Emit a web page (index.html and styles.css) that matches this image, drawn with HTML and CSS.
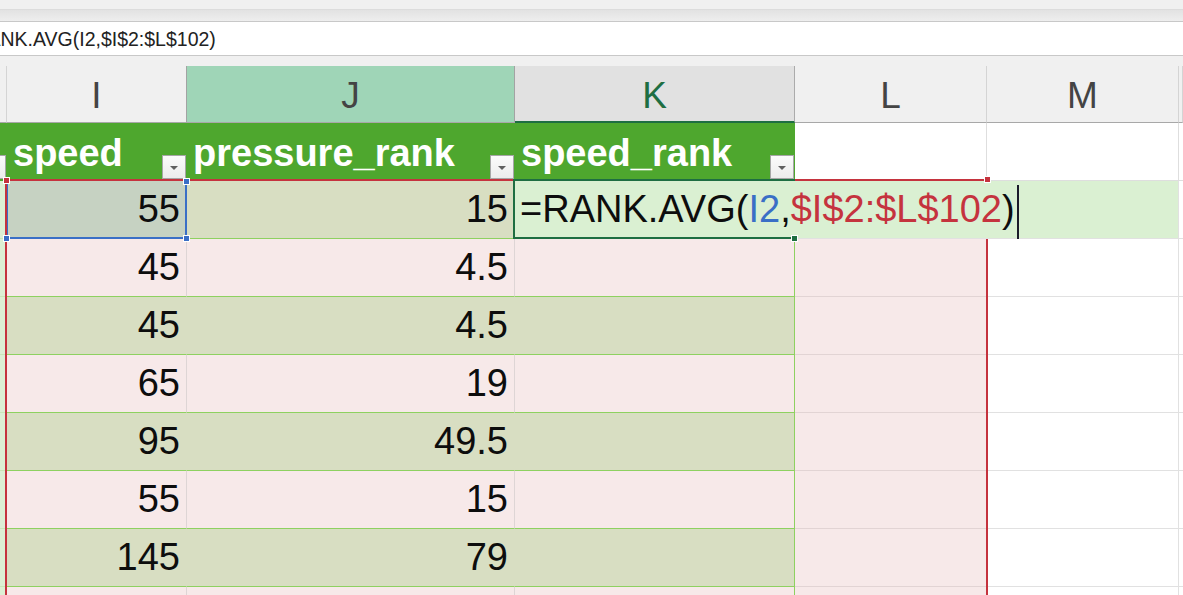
FILE: index.html
```html
<!DOCTYPE html>
<html lang="en">
<head>
<meta charset="utf-8">
<title>Sheet</title>
<link rel="stylesheet" href="styles.css">
</head>
<body>
<div class="chrome-top"></div>
<div class="chrome-shade"></div>
<div class="formula-bar"><span class="fx-text">=RANK.AVG(I2,$I$2:$L$102)</span></div>
<div class="chrome-gap"></div>

<div class="sheet">
  <!-- column headers -->
  <div class="ch h-part"></div>
  <div class="ch before-sel">I</div>
  <div class="ch sel-col">J</div>
  <div class="ch active-col">K</div>
  <div class="ch">L</div>
  <div class="ch">M</div>
  <div class="ch"></div>

  <!-- table header row -->
  <div class="th th-part"><span class="filter"></span></div>
  <div class="th"><span class="th-label">speed</span><span class="filter"></span></div>
  <div class="th"><span class="th-label">pressure_rank</span><span class="filter"></span></div>
  <div class="th"><span class="th-label">speed_rank</span><span class="filter"></span></div>
  <div class="blank hl"></div>
  <div class="blank hm"></div>
  <div class="blank hn"></div>

  <!-- row 2 -->
  <div class="cell hcol"></div>
  <div class="cell num selected">55</div>
  <div class="cell num green">15</div>
  <div class="cell editor">=RANK.AVG(<span class="ref-blue">I2</span>,<span class="ref-red">$I$2:$L$102</span>)<span class="caret"></span></div>
  <div class="cell n"></div>

  <!-- row 3 -->
  <div class="cell hcol"></div>
  <div class="cell num pink">45</div>
  <div class="cell num pink">4.5</div>
  <div class="cell k pink"></div>
  <div class="cell l"></div>
  <div class="cell m"></div>
  <div class="cell n"></div>

  <!-- row 4 -->
  <div class="cell hcol"></div>
  <div class="cell num green">45</div>
  <div class="cell num green">4.5</div>
  <div class="cell k green"></div>
  <div class="cell l"></div>
  <div class="cell m"></div>
  <div class="cell n"></div>

  <!-- row 5 -->
  <div class="cell hcol"></div>
  <div class="cell num pink">65</div>
  <div class="cell num pink">19</div>
  <div class="cell k pink"></div>
  <div class="cell l"></div>
  <div class="cell m"></div>
  <div class="cell n"></div>

  <!-- row 6 -->
  <div class="cell hcol"></div>
  <div class="cell num green">95</div>
  <div class="cell num green">49.5</div>
  <div class="cell k green"></div>
  <div class="cell l"></div>
  <div class="cell m"></div>
  <div class="cell n"></div>

  <!-- row 7 -->
  <div class="cell hcol"></div>
  <div class="cell num pink">55</div>
  <div class="cell num pink">15</div>
  <div class="cell k pink"></div>
  <div class="cell l"></div>
  <div class="cell m"></div>
  <div class="cell n"></div>

  <!-- row 8 -->
  <div class="cell hcol"></div>
  <div class="cell num green">145</div>
  <div class="cell num green">79</div>
  <div class="cell k green"></div>
  <div class="cell l"></div>
  <div class="cell m"></div>
  <div class="cell n"></div>

  <!-- row 9 -->
  <div class="cell hcol"></div>
  <div class="cell num pink"></div>
  <div class="cell num pink"></div>
  <div class="cell k pink"></div>
  <div class="cell l"></div>
  <div class="cell m"></div>
  <div class="cell n"></div>

  <!-- overlays -->
  <div class="range-red"></div>
  <div class="range-blue"></div>
  <div class="active-box"></div>
  <span class="handle red h-red-tl"></span>
  <span class="handle red h-red-tr"></span>
  <span class="handle blue h-blue-tr"></span>
  <span class="handle blue h-blue-bl"></span>
  <span class="handle blue h-blue-br"></span>
  <span class="handle fill h-fill"></span>
</div>
</body>
</html>
```

FILE: styles.css
```css
* { box-sizing: border-box; }
html, body { margin: 0; padding: 0; }
body {
  width: 1183px;
  height: 595px;
  overflow: hidden;
  background: #f0f0f0;
  font-family: "Liberation Sans", Arial, sans-serif;
}

.chrome-top {
  height: 10px;
  background: #f0f0f0;
  border-bottom: 1px solid #dcdcdc;
}
.chrome-shade {
  height: 12px;
  background: linear-gradient(#e2e2e2, #eeeeee);
  border-bottom: 1px solid #c8c8c8;
}
.formula-bar {
  height: 34px;
  background: #ffffff;
  border-bottom: 1px solid #c8c8c8;
  overflow: hidden;
  white-space: nowrap;
  font-size: 19.5px;
  line-height: 35px;
  color: #222222;
}
.fx-text {
  display: inline-block;
  margin-left: -38px;
}
.chrome-gap { height: 10px; background: #f0f0f0; }

.sheet {
  position: relative;
  display: grid;
  grid-template-columns: 7px 180px 328px 280px 192px 192px 4px;
  grid-template-rows: 57px repeat(9, 58px);
  height: 529px;
  overflow: hidden;
}

/* column headers */
.ch {
  background: #f0f0f0;
  border-right: 1px solid #d4d4d4;
  border-bottom: 1px solid #a8a8a8;
  color: #444444;
  font-size: 37px;
  padding-top: 4px;
  line-height: 52px;
  text-align: center;
}
.ch.before-sel { border-right-color: #a3a3a3; }
.ch.sel-col { background: #9fd5b7; border-right-color: #a3a3a3; }
.ch.active-col {
  background: #e1e1e1;
  color: #1e6e42;
  border-right-color: #ababab;
  border-bottom: 2px solid #1e6e42;
}

/* table header */
.th {
  display: flex;
  background: #4ea72e;
  border-right: 1px solid #4ea72e;
  border-bottom: 1px solid #4ea72e;
  color: #ffffff;
  font-weight: bold;
  font-size: 38px;
  overflow: hidden;
}
.th-part { justify-content: flex-end; }
.th-label {
  flex: 1;
  min-width: 0;
  padding-left: 6px;
  padding-top: 4px;
  line-height: 53px;
  white-space: nowrap;
  overflow: hidden;
}
.filter {
  flex: none;
  align-self: flex-end;
  width: 24px;
  height: 24px;
  margin-bottom: 1px;
  border: 1px solid #a6a6a6;
  background: linear-gradient(#fbfbfb, #ececec);
  display: flex;
  align-items: center;
  justify-content: center;
}
.filter::after {
  content: "";
  width: 0;
  height: 0;
  margin-top: 1px;
  border-left: 4px solid transparent;
  border-right: 4px solid transparent;
  border-top: 4px solid #606060;
}
.blank {
  background: #ffffff;
  border-right: 1px solid #dedede;
  border-bottom: 1px solid #dedede;
}
.blank.hn { border-right: none; }

/* data cells */
.cell {
  font-size: 38px;
  line-height: 57px;
  color: #0d0d0d;
  border-bottom: 1px solid #8ed160;
  white-space: nowrap;
}
.num { text-align: right; padding-right: 6px; }
.pink { background: #f7e9e9; border-right: 1px solid #ded5d5; }
.green { background: #d8dec2; border-right: 1px solid #d8dec2; }
.selected { background: #c6d2c2; border-right: 1px solid #c6d2c2; }
.k { border-right: 1px solid #8ed160; }
.hcol { background: #dcefd4; border-bottom-color: #c9e6b8; }
.l {
  background: #f7e9e9;
  border-bottom: 1px solid #e2d4d4;
  border-right: 1px solid #e2d4d4;
}
.m {
  background: #ffffff;
  border-bottom: 1px solid #e1e1e1;
  border-right: 1px solid #e1e1e1;
}
.n { background: #ffffff; border-bottom: 1px solid #e1e1e1; }

.editor {
  grid-column: span 3;
  z-index: 4;
  background: #daf0d2;
  border-bottom: 1px solid #e1e1e1;
  border-right: 1px solid #e1e1e1;
  padding-left: 5px;
  overflow: visible;
}
.ref-blue { color: #3a6fc6; }
.ref-red { color: #c5333e; }
.caret {
  display: inline-block;
  width: 2px;
  height: 54px;
  margin-left: 2px;
  background: #1a1a2a;
  vertical-align: middle;
}

/* overlays */
.range-red {
  position: absolute;
  left: 5px;
  top: 113px;
  width: 983px;
  height: 500px;
  border: 2px solid #c5333e;
  z-index: 3;
}
.range-blue {
  position: absolute;
  left: 6px;
  top: 114px;
  width: 181px;
  height: 59px;
  border: 2px solid #3a6fc6;
  border-top: none;
  z-index: 2;
}
.active-box {
  position: absolute;
  left: 513px;
  top: 113px;
  width: 282px;
  height: 60px;
  border: 2px solid #1e6e42;
  border-right: none;
  z-index: 5;
}
.handle {
  position: absolute;
  width: 7px;
  height: 7px;
  border: 1px solid #ffffff;
  z-index: 6;
}
.handle.red { background: #c5333e; }
.handle.blue { background: #3a6fc6; }
.handle.fill { background: #1e6e42; }
.h-red-tl { left: 3px; top: 111px; }
.h-red-tr { left: 984px; top: 110px; }
.h-blue-tr { left: 183px; top: 112px; }
.h-blue-bl { left: 3px; top: 169px; }
.h-blue-br { left: 183px; top: 169px; }
.h-fill { left: 791px; top: 169px; }
```
